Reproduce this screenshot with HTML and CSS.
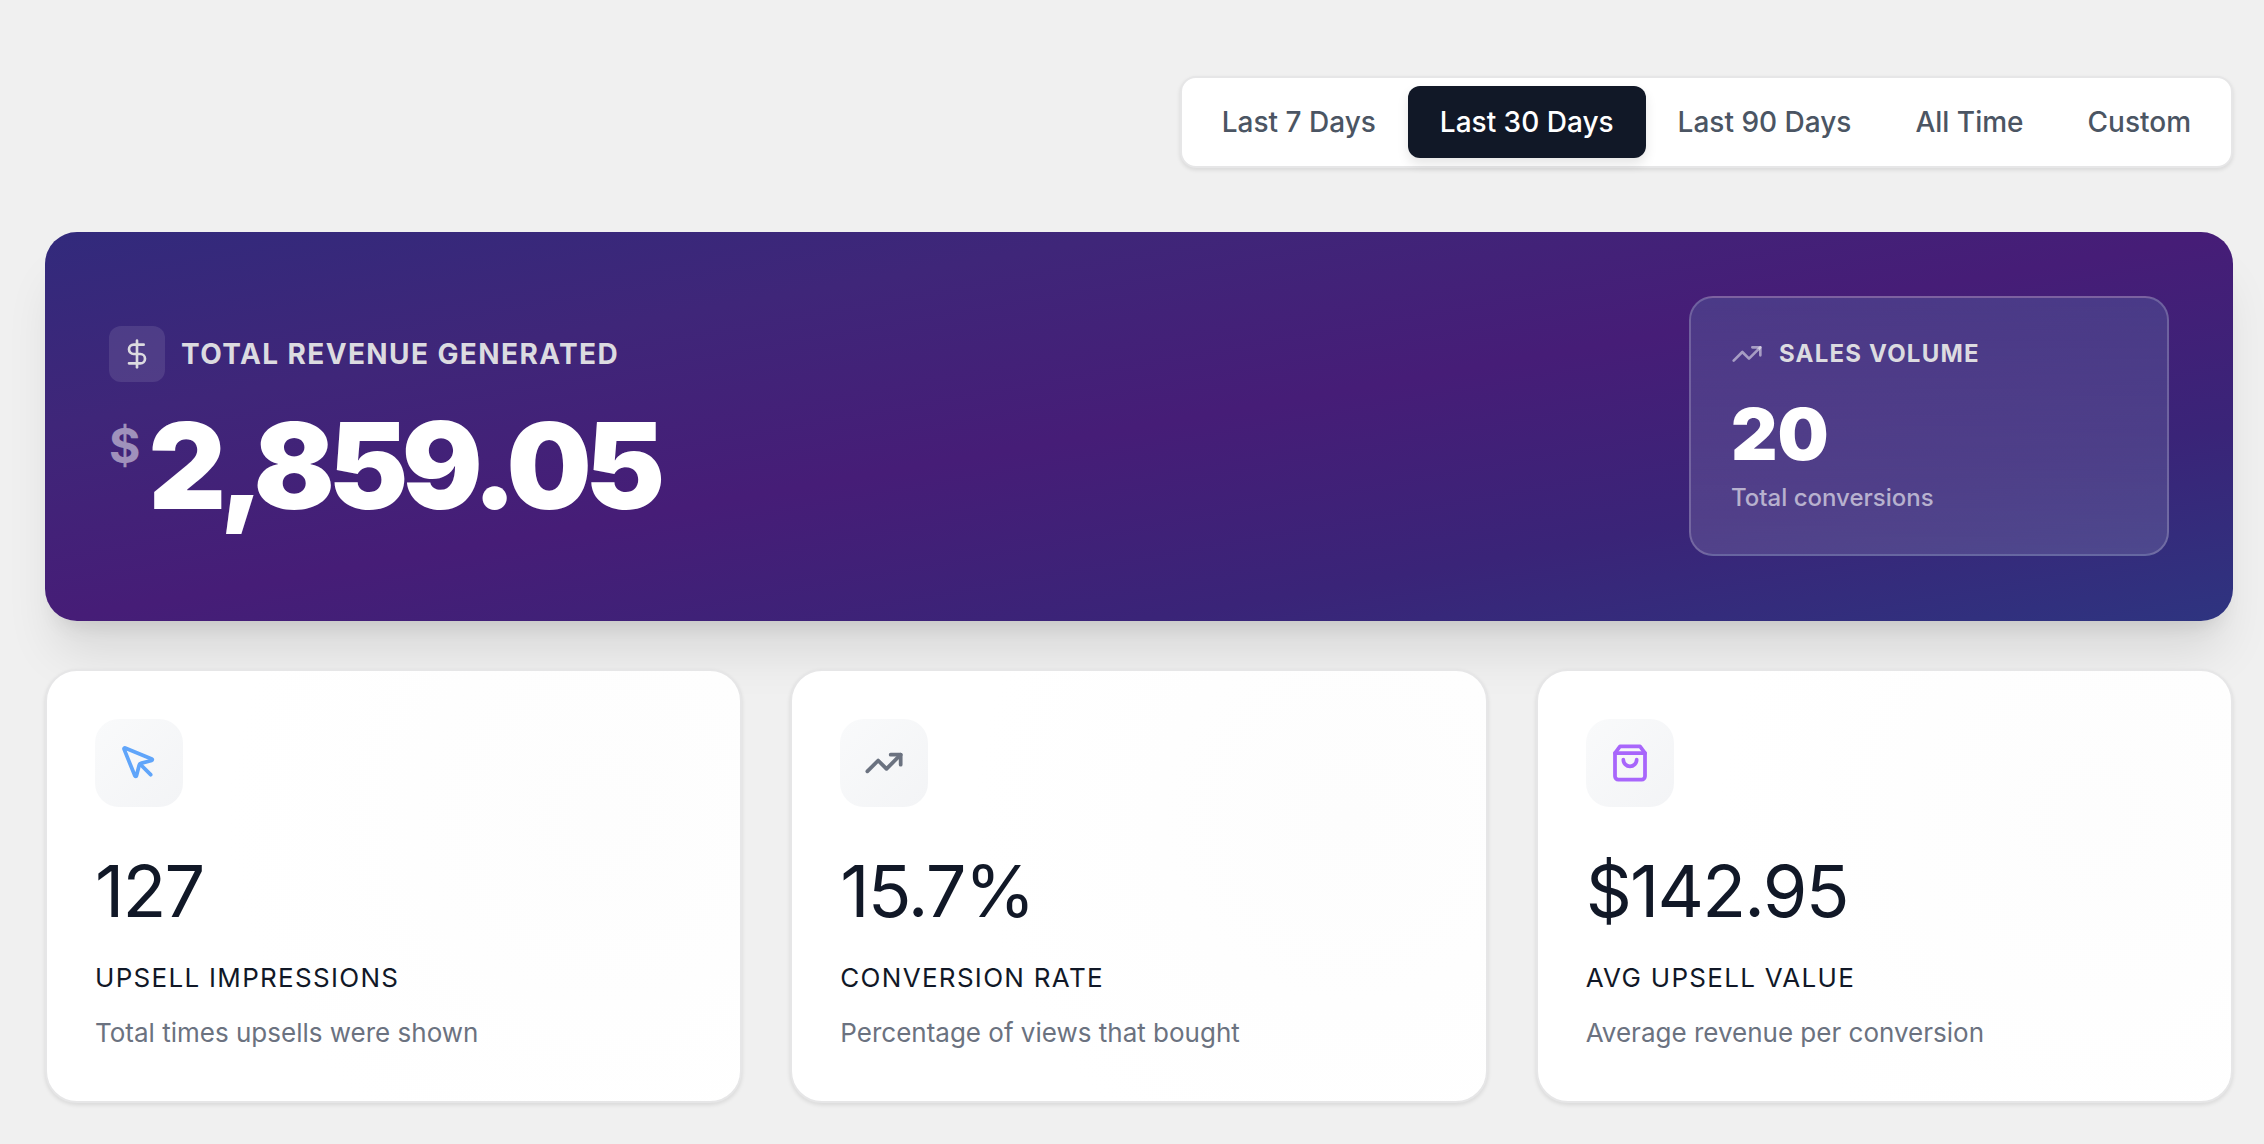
FILE: index.html
```html
<!DOCTYPE html>
<html lang="en">
<head>
    <meta charset="UTF-8">
    <meta name="viewport" content="width=device-width, initial-scale=1.0">
    <title>Upsell Analytics</title>
    <link rel="stylesheet" href="styles.css">
</head>
<body>
    <main class="dashboard">
        <div class="range-bar">
            <button type="button" class="range-button">Last 7 Days</button>
            <button type="button" class="range-button active">Last 30 Days</button>
            <button type="button" class="range-button">Last 90 Days</button>
            <button type="button" class="range-button">All Time</button>
            <button type="button" class="range-button">Custom</button>
        </div>

        <section class="hero">
            <div class="revenue">
                <div class="revenue-header">
                    <span class="revenue-icon">
                        <svg class="icon icon-small" viewBox="0 0 24 24">
                            <path d="M12 2v20"/>
                            <path d="M17 5H9.5a3.5 3.5 0 0 0 0 7h5a3.5 3.5 0 0 1 0 7H6"/>
                        </svg>
                    </span>
                    <h2 class="revenue-title">Total Revenue Generated</h2>
                </div>
                <div class="revenue-amount">
                    <span class="currency">$</span>
                    <span class="amount">2,859.05</span>
                </div>
            </div>

            <div class="sales">
                <div class="sales-header">
                    <svg class="icon icon-small" viewBox="0 0 24 24">
                        <path d="M22 7 13.5 15.5 8.5 10.5 2 17"/>
                        <path d="M16 7h6v6"/>
                    </svg>
                    <h3 class="sales-title">Sales Volume</h3>
                </div>
                <div class="sales-value">20</div>
                <p class="sales-note">Total conversions</p>
            </div>
        </section>

        <section class="cards">
            <div class="card">
                <div class="card-icon blue">
                    <svg class="icon icon-large" viewBox="0 0 24 24">
                        <path d="M12.586 12.586 19 19"/>
                        <path d="M3.688 3.037a.497.497 0 0 0-.651.651l6.5 15.999a.501.501 0 0 0 .947-.062l1.569-6.083a2 2 0 0 1 1.448-1.479l6.124-1.579a.5.5 0 0 0 .063-.947z"/>
                    </svg>
                </div>
                <div class="card-value">127</div>
                <h3 class="card-label">Upsell Impressions</h3>
                <p class="card-note">Total times upsells were shown</p>
            </div>

            <div class="card">
                <div class="card-icon gray">
                    <svg class="icon icon-large" viewBox="0 0 24 24">
                        <path d="M22 7 13.5 15.5 8.5 10.5 2 17"/>
                        <path d="M16 7h6v6"/>
                    </svg>
                </div>
                <div class="card-value">15.7%</div>
                <h3 class="card-label">Conversion Rate</h3>
                <p class="card-note">Percentage of views that bought</p>
            </div>

            <div class="card">
                <div class="card-icon purple">
                    <svg class="icon icon-large" viewBox="0 0 24 24">
                        <path d="M6 2 3 6v14a2 2 0 0 0 2 2h14a2 2 0 0 0 2-2V6l-3-4Z"/>
                        <path d="M3 6h18"/>
                        <path d="M16 10a4 4 0 0 1-8 0"/>
                    </svg>
                </div>
                <div class="card-value">$142.95</div>
                <h3 class="card-label">Avg Upsell Value</h3>
                <p class="card-note">Average revenue per conversion</p>
            </div>
        </section>
    </main>
</body>
</html>
```

FILE: styles.css
```css
* {
    box-sizing: border-box;
}
body {
    font-family: Inter, "Liberation Sans", sans-serif;
    margin: 0;
    background-color: #f0f0f0;
    color: #111827;
}
h2, h3, p {
    margin: 0;
}
.dashboard {
    display: flex;
    flex-direction: column;
    padding: 76px 31px 40px 45px;
}
.range-bar {
    display: flex;
    align-self: flex-end;
    margin-bottom: 64px;
    padding: 8px;
    background-color: #fff;
    border: 2px solid #e6e6e7;
    border-radius: 16px;
    box-shadow: 0 2px 4px rgba(0,0,0,0.1);
}
.range-button {
    padding: 16px 32px;
    border: none;
    border-radius: 12px;
    background: none;
    color: #4b5563;
    font-family: inherit;
    font-size: 28px;
    font-weight: 500;
    line-height: 40px;
    cursor: pointer;
}
.range-button.active {
    background-color: #111827;
    color: #fff;
    box-shadow: 0 6px 12px rgba(0,0,0,0.1);
}
.icon {
    display: block;
    fill: none;
    stroke: currentColor;
    stroke-width: 2;
    stroke-linecap: round;
    stroke-linejoin: round;
}
.icon-small {
    width: 32px;
    height: 32px;
}
.icon-large {
    width: 40px;
    height: 40px;
    stroke-width: 2.25;
}
.hero {
    display: flex;
    justify-content: space-between;
    align-items: center;
    margin-bottom: 48px;
    padding: 64px 64px 65px;
    border-radius: 32px;
    background-image: linear-gradient(to bottom right, #322a7c, #3f2679 25%, #461d77 50%, #3a2478 75%, #2e3480);
    box-shadow: 0 40px 50px -10px rgba(0,0,0,0.1), 0 16px 20px -12px rgba(0,0,0,0.1);
    color: #fff;
}
.revenue-header {
    display: flex;
    align-items: center;
    gap: 16px;
    margin-bottom: 24px;
}
.revenue-icon {
    display: flex;
    padding: 12px;
    border-radius: 12px;
    background-color: rgba(255,255,255,0.1);
    color: #dcdbe0;
}
.revenue-title {
    color: #dcdbe0;
    font-size: 28px;
    font-weight: 700;
    line-height: 40px;
    letter-spacing: 0.05em;
    text-transform: uppercase;
}
.revenue-amount {
    display: flex;
    align-items: flex-start;
    gap: 8px;
}
.currency {
    padding-top: 16px;
    color: rgba(255,255,255,0.5);
    font-size: 48px;
    font-weight: 700;
    line-height: 48px;
}
.amount {
    font-size: 120px;
    font-weight: 900;
    line-height: 120px;
    letter-spacing: -0.055em;
}
.sales {
    width: 480px;
    padding: 40px;
    border: 2px solid rgba(255,255,255,0.2);
    border-radius: 24px;
    background-image: linear-gradient(to bottom, rgba(84,100,160,0.4), rgba(255,255,255,0.13));
}
.sales-header {
    display: flex;
    align-items: center;
    gap: 16px;
    margin-bottom: 24px;
    color: rgba(255,255,255,0.5);
}
.sales-title {
    color: #dcdbe0;
    font-size: 24px;
    font-weight: 700;
    line-height: 32px;
    letter-spacing: 0.05em;
    text-transform: uppercase;
}
.sales-value {
    margin-bottom: 8px;
    font-size: 72px;
    font-weight: 900;
    line-height: 80px;
}
.sales-note {
    color: rgba(255,255,255,0.6);
    font-size: 24px;
    font-weight: 500;
    line-height: 32px;
}
.cards {
    display: grid;
    grid-template-columns: repeat(3, 1fr);
    gap: 48px;
}
.card {
    padding: 48px;
    background-color: #fff;
    background-image: radial-gradient(circle at 80% 34%, #fdfdfd, #fff 60%);
    border: 2px solid #e6e6e7;
    border-radius: 32px;
    box-shadow: 0 2px 4px rgba(0,0,0,0.1);
}
.card-icon {
    display: flex;
    align-items: center;
    justify-content: center;
    width: 88px;
    height: 88px;
    margin-bottom: 48px;
    border-radius: 24px;
    background-image: linear-gradient(to bottom right, #f9fafb, #f3f4f6);
}
.blue {
    color: #60a5fa;
}
.gray {
    color: #6b7280;
}
.purple {
    color: #a866fb;
}
.card-value {
    margin-bottom: 32px;
    font-size: 72px;
    line-height: 72px;
    letter-spacing: -0.025em;
}
.card-label {
    margin-bottom: 16px;
    font-size: 26px;
    font-weight: 400;
    line-height: 38px;
    letter-spacing: 0.05em;
    text-transform: uppercase;
}
.card-note {
    color: #6b7280;
    font-size: 26px;
    line-height: 40px;
}
```
